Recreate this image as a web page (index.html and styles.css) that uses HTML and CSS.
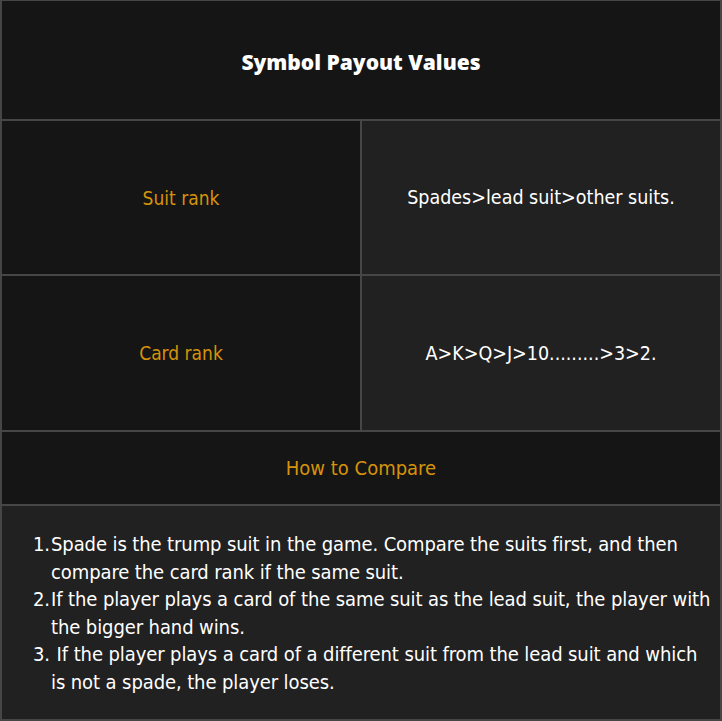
FILE: index.html
```html
<!DOCTYPE html>
<html>
<head>
<meta charset="utf-8">
<link rel="stylesheet" href="styles.css">
</head>
<body>
<div class="panel">
  <div class="title">Symbol Payout Values</div>
  <div class="grid">
    <div class="cell label">Suit rank</div>
    <div class="cell value">Spades&gt;lead suit&gt;other suits.</div>
    <div class="cell label">Card rank</div>
    <div class="cell value">A&gt;K&gt;Q&gt;J&gt;10.........&gt;3&gt;2.</div>
  </div>
  <div class="subhead">How to Compare</div>
  <div class="rules">
    <div class="rule"><span class="num">1.</span><span class="txt">Spade is the trump suit in the game. Compare the suits first, and then<br>compare the card rank if the same suit.</span></div>
    <div class="rule"><span class="num">2.</span><span class="txt">If the player plays a card of the same suit as the lead suit, the player with<br>the bigger hand wins.</span></div>
    <div class="rule"><span class="num">3.</span><span class="txt">&nbsp;If the player plays a card of a different suit from the lead suit and which<br>is not a spade, the player loses.</span></div>
  </div>
</div>
</body>
</html>
```
FILE: styles.css
```css
html, body {
  margin: 0;
  background: #151515;
}
.panel {
  box-sizing: border-box;
  width: 722px;
  height: 721px;
  padding: 1px 2px 2px 2px;
  background: #464646;
  display: flex;
  flex-direction: column;
  gap: 2px;
  font-family: "DejaVu Sans Condensed", "DejaVu Sans", sans-serif;
  color: #ffffff;
}
.title {
  height: 118px;
  flex: none;
  background: #151515;
  display: flex;
  align-items: center;
  justify-content: center;
  font: 800 21px "Open Sans", sans-serif;
  padding-top: 4px;
  box-sizing: border-box;
}
.grid {
  display: grid;
  grid-template-columns: 1fr 1fr;
  grid-template-rows: 153px 154px;
  gap: 2px;
  flex: none;
}
.cell {
  display: flex;
  align-items: center;
  justify-content: center;
  box-sizing: border-box;
}
.label {
  background: #151515;
  color: #d5930b;
  font-size: 19px;
}
.value {
  background: #212121;
  font-size: 19.5px;
}
.subhead {
  height: 72px;
  flex: none;
  background: #151515;
  color: #d5930b;
  font-size: 20px;
  display: flex;
  align-items: center;
  justify-content: center;
}
.rules {
  flex: 1;
  background: #212121;
  padding: 25px 2px 0 31px;
  font-size: 20px;
  line-height: 27.5px;
  letter-spacing: -0.1px;
}
.rule {
  display: flex;
}
.num {
  flex: none;
  width: 18px;
}
.txt {
  flex: 1;
  white-space: nowrap;
}
```
